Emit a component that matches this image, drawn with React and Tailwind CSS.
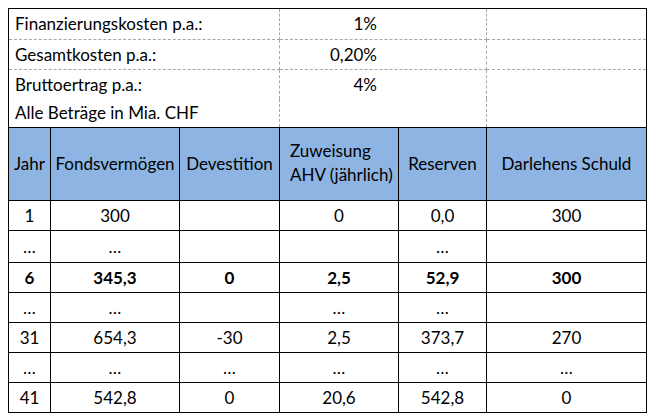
import React from "react";

const dash = "border-dashed border-[#a6a6a6]";

const topRows = [
    { label: "Finanzierungskosten p.a.:", value: "1%", h: "h-[31px]", line: true },
    { label: "Gesamtkosten p.a.:", value: "0,20%", h: "h-[30px]", line: true },
    { label: "Bruttoertrag p.a.:", value: "4%", h: "h-[29px]", line: false },
    { label: "Alle Beträge in Mia. CHF", value: "", h: "h-[28px]", line: false },
];

const rows = [
    { cells: ["1", "300", "", "0", "0,0", "300"], h: "h-[30px]" },
    { cells: ["…", "…", "", "", "…", ""], h: "h-[32px]" },
    { cells: ["6", "345,3", "0", "2,5", "52,9", "300"], h: "h-[30px]", bold: true },
    { cells: ["…", "…", "", "…", "…", ""], h: "h-[30px]" },
    { cells: ["31", "654,3", "-30", "2,5", "373,7", "270"], h: "h-[30px]" },
    { cells: ["…", "…", "…", "…", "…", "…"], h: "h-[30px]" },
    { cells: ["41", "542,8", "0", "20,6", "542,8", "0"], h: "h-[29px]" },
];

export default function App() {
    return (
        <div className="w-[652px] h-[419px] bg-white p-[8px] text-black text-[17px]" style={{ fontFamily: "Lato, 'Liberation Sans', sans-serif" }}>
            <div className="w-[639px] border border-black">
                {/* parameter block */}
                <div className="grid grid-cols-[271px_207px_1fr]">
                    {topRows.map((r, i) => (
                        <React.Fragment key={i}>
                            <div className={`${r.h} ${dash} border-r ${r.line ? "border-b" : ""} flex items-center pl-[6px]`}>
                                {r.label}
                            </div>
                            <div className={`${r.h} ${dash} border-r ${r.line ? "border-b" : ""} flex items-center justify-end pr-[109px]`}>
                                {r.value}
                            </div>
                            <div className={`${r.h} ${dash} ${r.line ? "border-b" : ""}`} />
                        </React.Fragment>
                    ))}
                </div>

                {/* header */}
                <div className="grid grid-cols-[42px_129px_100px_119px_88px_1fr] bg-[#8db4e2]">
                    {["Jahr", "Fondsvermögen", "Devestition", null, "Reserven", "Darlehens Schuld"].map((t, i) => (
                        <div key={i} className={`h-[74px] border-t border-b border-black ${i < 5 ? "border-r" : ""} flex items-center justify-center whitespace-nowrap`}>
                            {t === null ? (
                                <div className="w-full pl-[10px] leading-[24px] pb-[3px]">
                                    <div>Zuweisung</div>
                                    <div>AHV (jährlich)</div>
                                </div>
                            ) : t}
                        </div>
                    ))}
                </div>

                {/* data */}
                <div className="grid grid-cols-[42px_129px_100px_119px_88px_1fr]">
                    {rows.map((r, ri) => r.cells.map((c, ci) => (
                        <div
                            key={`${ri}-${ci}`}
                            className={`${r.h} border-black ${ci < 5 ? "border-r" : ""} ${ri < rows.length - 1 ? "border-b" : ""} ${r.bold ? "font-bold" : ""} flex items-center justify-center`}
                        >
                            {c}
                        </div>
                    )))}
                </div>
            </div>
        </div>
    );
}
